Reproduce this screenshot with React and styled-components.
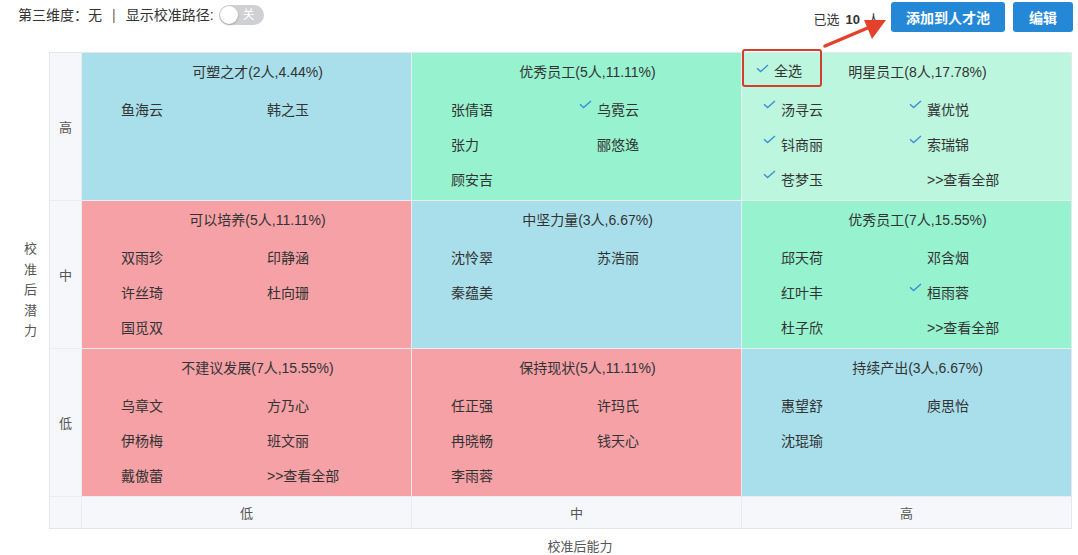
import React from "react";
import styled, { createGlobalStyle } from "styled-components";

const GlobalStyle = createGlobalStyle`
  body {
    margin: 0;
    background: #fff;
    font-family: "Liberation Sans", "Noto Sans CJK SC", sans-serif;
    color: #333;
  }
`;

const COLORS = {
  blue: "#a9dfeb",
  green: "#97f2cf",
  mint: "#bdf6de",
  pink: "#f5a1a6",
};

const Page = styled.div`
  position: relative;
  width: 1078px;
  height: 555px;
  overflow: hidden;
`;

const TopBar = styled.div`
  display: flex;
  justify-content: space-between;
  align-items: flex-start;
  height: 52px;
  padding: 0 5px 0 18px;
  box-sizing: border-box;
`;

const Filters = styled.div`
  display: flex;
  align-items: center;
  margin-top: 5px;
  font-size: 14px;
  line-height: 20px;
  color: #333;
`;

const Sep = styled.span`
  margin: 0 10px 0 10px;
  color: #666;
`;

const Toggle = styled.span`
  position: relative;
  display: inline-flex;
  align-items: center;
  justify-content: flex-end;
  width: 45px;
  height: 20px;
  margin-left: 5px;
  border-radius: 10px;
  background: #cfd0d3;
  color: #fff;
  font-size: 12px;
  box-sizing: border-box;
  padding-right: 9px;
`;

const Knob = styled.span`
  position: absolute;
  left: 1px;
  top: 1px;
  width: 18px;
  height: 18px;
  border-radius: 50%;
  background: #fff;
  box-shadow: 0 1px 2px rgba(0, 0, 0, 0.25);
`;

const Actions = styled.div`
  display: flex;
  align-items: flex-start;
`;

const Picked = styled.span`
  margin: 11px 11px 0 0;
  font-size: 13px;
  line-height: 18px;
  color: #333;

  b {
    margin: 0 7px 0 6px;
  }
`;

const Button = styled.button`
  height: 30px;
  width: ${(p) => p.w}px;
  margin: 2px 0 0 ${(p) => (p.gap ? 8 : 0)}px;
  border: none;
  border-radius: 3px;
  background: #2488d6;
  color: #fff;
  font-family: inherit;
  font-size: 14px;
  font-weight: bold;
  padding: 0;
`;

const Body = styled.div`
  display: flex;
  align-items: center;
`;

const YAxis = styled.div`
  width: 49px;
  padding-left: 12px;
  box-sizing: border-box;
  display: flex;
  flex-direction: column;
  align-items: center;
  font-size: 13px;
  line-height: 20.5px;
  color: #555;
`;

const Matrix = styled.div`
  display: grid;
  grid-template-columns: 31px repeat(3, 329px);
  grid-template-rows: repeat(3, 147px) 31px;
  gap: 1px;
  background: #e9ecf1;
  border: 1px solid #e4e7ed;
`;

const Label = styled.div`
  display: flex;
  align-items: center;
  justify-content: center;
  background: #f5f7fa;
  font-size: 13px;
  color: #555;
`;

const Cell = styled.div`
  position: relative;
  background: ${(p) => COLORS[p.tone]};
  padding-top: 10px;
  box-sizing: border-box;
`;

const Title = styled.div`
  padding-left: 22px;
  text-align: center;
  font-size: 14px;
  line-height: 18px;
  color: #333;
`;

const Names = styled.div`
  display: grid;
  grid-template-columns: 146px 146px;
  grid-auto-rows: 35px;
  align-items: center;
  margin-top: 11px;
  padding-left: 21px;
`;

const Name = styled.div`
  display: flex;
  align-items: center;
  font-size: 14px;
  line-height: 18px;
  color: #333;
`;

const CheckSlot = styled.span`
  display: inline-flex;
  width: 18px;
  flex: none;

  svg {
    transform: translateY(${(p) => (p.raised ? -5 : -1)}px);
  }
`;

const SelectAll = styled.div`
  position: absolute;
  left: 0;
  top: -4px;
  width: 80px;
  height: 38px;
  box-sizing: border-box;
  border: 2.5px solid #d23f2c;
  border-radius: 3px;
  display: flex;
  align-items: center;
  padding: 3px 0 0 12px;
  font-size: 14px;
  color: #333;
`;

const XAxis = styled.div`
  margin-top: 9px;
  padding-left: 82px;
  text-align: center;
  font-size: 13px;
  line-height: 18px;
  color: #555;
`;

const Arrow = styled.svg`
  position: absolute;
  left: 820px;
  top: 12px;
`;

const Check = () => (
  <svg width="13" height="9" viewBox="0 0 13 9">
    <path d="M1 4.2 L4.6 7.6 L12 1" fill="none" stroke="#3a8fd6" strokeWidth="1.4" />
  </svg>
);

const cells = [
  [
    { tone: "blue", title: "可塑之才(2人,4.44%)", names: [["鱼海云"], ["韩之玉"]] },
    {
      tone: "green",
      title: "优秀员工(5人,11.11%)",
      names: [["张倩语"], ["乌霓云", 1], ["张力"], ["郦悠逸"], ["顾安吉"]],
    },
    {
      tone: "mint",
      title: "明星员工(8人,17.78%)",
      all: true,
      names: [["汤寻云", 1], ["冀优悦", 1], ["钭商丽", 1], ["索瑞锦", 1], ["苍梦玉", 1], [">>查看全部"]],
    },
  ],
  [
    {
      tone: "pink",
      title: "可以培养(5人,11.11%)",
      names: [["双雨珍"], ["印静涵"], ["许丝琦"], ["杜向珊"], ["国觅双"]],
    },
    { tone: "blue", title: "中坚力量(3人,6.67%)", names: [["沈怜翠"], ["苏浩丽"], ["秦蕴美"]] },
    {
      tone: "green",
      title: "优秀员工(7人,15.55%)",
      names: [["邱天荷"], ["邓含烟"], ["红叶丰"], ["桓雨蓉", 1], ["杜子欣"], [">>查看全部"]],
    },
  ],
  [
    {
      tone: "pink",
      title: "不建议发展(7人,15.55%)",
      names: [["乌章文"], ["方乃心"], ["伊杨梅"], ["班文丽"], ["戴傲蕾"], [">>查看全部"]],
    },
    {
      tone: "pink",
      title: "保持现状(5人,11.11%)",
      names: [["任正强"], ["许玛氏"], ["冉晓畅"], ["钱天心"], ["李雨蓉"]],
    },
    { tone: "blue", title: "持续产出(3人,6.67%)", names: [["惠望舒"], ["庾思怡"], ["沈琨瑜"]] },
  ],
];

const rowLabels = ["高", "中", "低"];

export default function App() {
  return (
    <Page>
      <GlobalStyle />
      <TopBar>
        <Filters>
          第三维度：无<Sep>|</Sep>显示校准路径:
          <Toggle>
            <Knob />关
          </Toggle>
        </Filters>
        <Actions>
          <Picked>
            已选<b>10</b>人
          </Picked>
          <Button w={114}>添加到人才池</Button>
          <Button w={60} gap>
            编辑
          </Button>
        </Actions>
      </TopBar>

      <Body>
        <YAxis>
          {"校准后潜力".split("").map((c) => (
            <span key={c}>{c}</span>
          ))}
        </YAxis>
        <Matrix>
          {cells.map((row, r) => (
            <React.Fragment key={r}>
              <Label>{rowLabels[r]}</Label>
              {row.map((cell, i) => (
                <Cell key={i} tone={cell.tone}>
                  {cell.all && (
                    <SelectAll>
                      <CheckSlot>
                        <Check />
                      </CheckSlot>
                      全选
                    </SelectAll>
                  )}
                  <Title>{cell.title}</Title>
                  <Names>
                    {cell.names.map(([n, checked]) => (
                      <Name key={n}>
                        <CheckSlot raised>{checked && <Check />}</CheckSlot>
                        {n}
                      </Name>
                    ))}
                  </Names>
                </Cell>
              ))}
            </React.Fragment>
          ))}
          <Label />
          <Label>低</Label>
          <Label>中</Label>
          <Label>高</Label>
        </Matrix>
      </Body>
      <XAxis>校准后能力</XAxis>

      <Arrow width="70" height="40" viewBox="0 0 70 40">
        <path d="M5 34 L50 15" stroke="#e5402b" strokeWidth="3.5" strokeLinecap="round" />
        <path d="M66 8 L44 8 L52 27 Z" fill="#e5402b" />
      </Arrow>
    </Page>
  );
}
